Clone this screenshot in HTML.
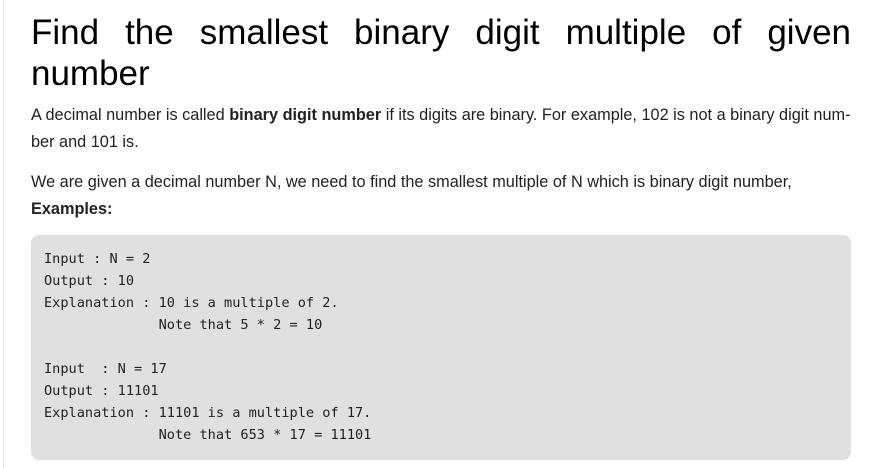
<!DOCTYPE html>
<html><head><style>
body{margin:0;background:#fff;width:875px;height:468px;overflow:hidden;font-family:"Liberation Sans",Arial,sans-serif;}
.wrap{position:absolute;left:3px;top:0;width:872px;height:468px;border-left:1px solid #e4e4e4;}
h1{position:absolute;left:27px;top:12px;width:820px;margin:0;font-weight:normal;font-size:35px;line-height:41px;text-align:justify;text-align-last:left;color:#000;}
p{position:absolute;left:27px;width:822px;margin:0;font-size:16.3px;line-height:27px;color:#222;}
pre{position:absolute;left:27px;top:235px;width:807px;height:212px;margin:0;padding:13px 0 0 13px;background:#e0e0e0;border-radius:8px;font-family:"DejaVu Sans Mono","Liberation Mono",monospace;font-size:13.6px;line-height:22px;color:#222;}
</style></head><body>
<div class="wrap">
<h1>Find the smallest binary digit multiple of given number</h1>
<p style="top:102px">A decimal number is called <b>binary digit number</b> if its digits are binary. For example, 102 is not a binary digit num-<br>ber and 101 is.</p>
<p style="top:169px">We are given a decimal number N, we need to find the smallest multiple of N which is binary digit number,<br><b>Examples:</b></p>
<pre>Input : N = 2
Output : 10
Explanation : 10 is a multiple of 2.
              Note that 5 * 2 = 10

Input  : N = 17
Output : 11101
Explanation : 11101 is a multiple of 17.
              Note that 653 * 17 = 11101</pre>
</div>
</body></html>
